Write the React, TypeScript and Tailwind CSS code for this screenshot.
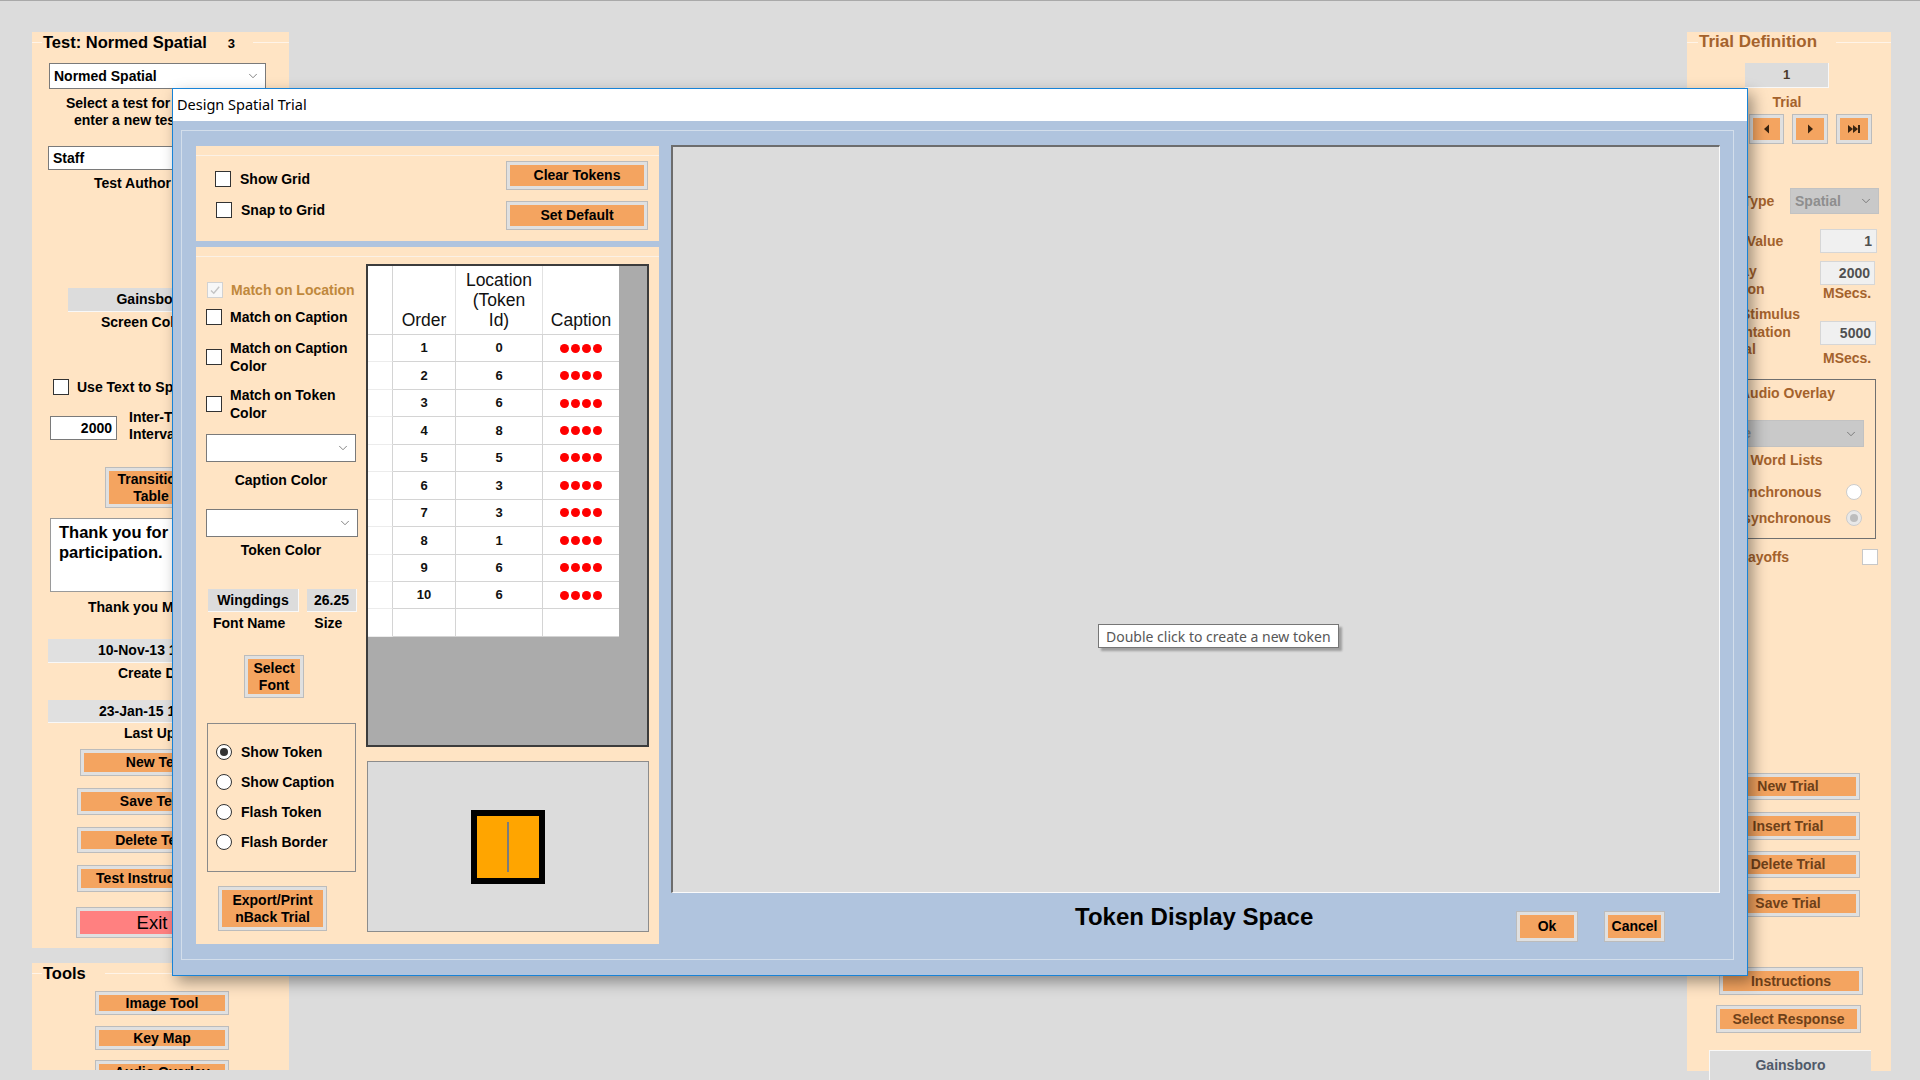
import React from 'react';
import { ChevronDown } from 'lucide-react';

type Kids = { children?: React.ReactNode; className?: string };

const Btn = ({ className = '', inner = 'bg-[#f4a460]', children, textCls = '' }: Kids & { inner?: string; textCls?: string }) => (
  <div className={`border border-[#bcbcbc] bg-[#e0e0e0] p-[3px] shrink-0 ${className}`}>
    <div className={`${inner} h-full w-full flex items-center justify-center text-center ${textCls}`}>{children}</div>
  </div>
);

const Cb = ({ disabled = false, checked = false, className = '' }: { disabled?: boolean; checked?: boolean; className?: string }) => (
  <div
    className={`w-4 h-4 shrink-0 border flex items-center justify-center ${
      disabled ? 'border-[#d2d2d2] bg-[#f7f7f7]' : 'border-[#333333] bg-white'
    } ${className}`}
  >
    {checked && (
      <svg width="12" height="12" viewBox="0 0 12 12">
        <path d="M2 6.5 L4.8 9.2 L10.2 2.8" fill="none" stroke={disabled ? '#c4c4c4' : '#222'} strokeWidth="1.4" />
      </svg>
    )}
  </div>
);

const Radio = ({ checked = false, disabled = false }: { checked?: boolean; disabled?: boolean }) => (
  <div
    className={`w-4 h-4 rounded-full border flex items-center justify-center shrink-0 ${
      disabled ? (checked ? 'border-[#cccccc] bg-[#e8e8e8]' : 'border-[#cccccc] bg-white') : 'border-[#333333] bg-white'
    }`}
  >
    {checked && <div className={`w-2 h-2 rounded-full ${disabled ? 'bg-[#bdbdbd]' : 'bg-[#333333]'}`} />}
  </div>
);

const Dd = ({ className = '', text = '', textCls = '' }: { className?: string; text?: string; textCls?: string }) => (
  <div className={`flex items-center border shrink-0 ${className}`}>
    <span className={`flex-1 pl-[4px] whitespace-nowrap overflow-hidden ${textCls}`}>{text}</span>
    <ChevronDown size={14} strokeWidth={1.4} className="mr-[5px] text-[#6a6a6a]" />
  </div>
);

const GroupTitle = ({ text, lead, extra, size }: { text: string; lead: number; extra?: React.ReactNode; size: string }) => (
  <div className="flex items-center h-[20px] shrink-0">
    <div className="h-px bg-[#fff4e8]" style={{ width: lead }} />
    <span className={`${size} leading-[20px] px-px whitespace-nowrap`}>{text}</span>
    {extra}
    <div className="flex-1 h-px bg-[#fff4e8] ml-[18px]" />
  </div>
);

const locations = [0, 6, 6, 8, 5, 3, 3, 1, 6, 6];

const Dots = () => (
  <div className="flex gap-[2px]">
    {[0, 1, 2, 3].map((i) => (
      <div key={i} className="w-[9px] h-[9px] rounded-full bg-[#ff0000]" />
    ))}
  </div>
);

function LeftPanel() {
  return (
    <div className="flex flex-col w-[257px] gap-[15px]">
      <div className="h-[916px] bg-[#ffe4c4] flex flex-col *:shrink-0 text-[14px] font-bold text-black">
        <GroupTitle
          text="Test: Normed Spatial"
          lead={10}
          size="text-[16.5px]"
          extra={<span className="ml-[20px] text-[13px] leading-[20px] pt-[3px]">3</span>}
        />
        <Dd className="ml-[17px] mt-[11px] w-[217px] h-[26px] bg-white border-[#7a7a7a]" text="Normed Spatial" textCls="text-[14px]" />
        <div className="mt-[6px] leading-[17px] whitespace-nowrap">
          <div className="ml-[34px]">Select a test for editing or</div>
          <div className="ml-[42px]">enter a new test name</div>
        </div>
        <div className="ml-[16px] mt-[17px] w-[218px] h-[24px] bg-white border border-[#7a7a7a] flex items-center pl-[4px]">Staff</div>
        <div className="ml-[62px] mt-[5px] h-[16px] leading-[16px] whitespace-nowrap">Test Author</div>
        <div className="ml-[36px] mt-[97px] w-[168px] h-[24px] bg-[#dcdcdc] border-b border-r border-[#f8f8f8] flex items-center justify-center">Gainsboro</div>
        <div className="ml-[69px] mt-[2px] h-[16px] leading-[16px] whitespace-nowrap">Screen Color</div>
        <div className="ml-[21px] mt-[49px] h-[16px] flex items-center gap-[8px] whitespace-nowrap">
          <Cb />
          <span className="leading-[16px]">Use Text to Speech</span>
        </div>
        <div className="ml-[18px] mt-[21px] flex items-start">
          <div className="w-[67px] h-[24px] bg-white border border-[#7a7a7a] flex items-center justify-end pr-[4px]">2000</div>
          <div className="ml-[12px] -mt-[7px] leading-[17px] whitespace-nowrap">
            <div>Inter-Trial</div>
            <div>Interval</div>
          </div>
        </div>
        <Btn className="ml-[73px] mt-[24px] w-[92px] h-[41px]" textCls="leading-[17px]">
          Transition
          <br />
          Table
        </Btn>
        <div className="ml-[18px] mt-[10px] w-[216px] h-[74px] bg-white border border-[#9a9a9a] pl-[8px] pt-[3px] text-[16.5px] leading-[20px] whitespace-nowrap">
          Thank you for your
          <br />
          participation.
        </div>
        <div className="ml-[56px] mt-[7px] h-[16px] leading-[16px] whitespace-nowrap">Thank you Message</div>
        <div className="ml-[16px] mt-[24px] w-[218px] h-[24px] bg-[#e0e0e0] border-b border-r border-[#f8f8f8] flex items-center pl-[50px] whitespace-nowrap">
          10-Nov-13 11:08
        </div>
        <div className="ml-[86px] mt-[2px] h-[16px] leading-[16px] whitespace-nowrap">Create Date</div>
        <div className="ml-[16px] mt-[19px] w-[218px] h-[23px] bg-[#e0e0e0] border-b border-r border-[#f8f8f8] flex items-center pl-[51px] whitespace-nowrap">
          23-Jan-15 10:12
        </div>
        <div className="ml-[92px] mt-[2px] h-[16px] leading-[16px] whitespace-nowrap">Last Updated</div>
        <Btn className="ml-[48px] mt-[8px] w-[152px] h-[27px]">New Test</Btn>
        <Btn className="ml-[45px] mt-[12px] w-[150px] h-[27px]">Save Test</Btn>
        <Btn className="ml-[45px] mt-[12px] w-[150px] h-[26px]">Delete Test</Btn>
        <Btn className="ml-[45px] mt-[12px] w-[150px] h-[27px]">Test Instructions</Btn>
        <Btn className="ml-[44px] mt-[15px] w-[152px] h-[31px]" inner="bg-[#ff8080]" textCls="text-[18.5px] font-normal">
          Exit
        </Btn>
      </div>
      <div className="h-[107px] bg-[#ffe4c4] flex flex-col *:shrink-0 overflow-hidden text-[14px] font-bold text-black">
        <GroupTitle text="Tools" lead={10} size="text-[16.5px]" />
        <Btn className="ml-[63px] mt-[8px] w-[134px] h-[24px]">Image Tool</Btn>
        <Btn className="ml-[63px] mt-[11px] w-[134px] h-[24px]">Key Map</Btn>
        <Btn className="ml-[63px] mt-[10px] w-[134px] h-[24px]">Audio Overlay</Btn>
      </div>
    </div>
  );
}

const NavIcon = ({ kind }: { kind: 'prev' | 'next' | 'last' }) => (
  <svg width="14" height="12" viewBox="0 0 14 12">
    {kind === 'prev' && <path d="M4 6 L9 1.5 L9 10.5 Z" fill="#3a2410" />}
    {kind === 'next' && <path d="M10 6 L5 1.5 L5 10.5 Z" fill="#3a2410" />}
    {kind === 'last' && (
      <g fill="#3a2410">
        <path d="M1 2 L6 6 L1 10 Z" />
        <path d="M6 2 L11 6 L6 10 Z" />
        <rect x="11" y="2" width="2" height="8" />
      </g>
    )}
  </svg>
);

function RightPanel() {
  const inp = 'h-[24px] bg-[#f0f0f0] border border-[#d6d6d6] flex items-center justify-end pr-[4px] text-[#505050]';
  return (
    <div className="w-[204px] h-[1039px] bg-[#ffe4c4] flex flex-col *:shrink-0 text-[14px] font-bold text-[#a4622c]">
      <GroupTitle text="Trial Definition" lead={11} size="text-[17px]" />
      <div className="ml-[58px] mt-[11px] w-[84px] h-[25px] bg-[#dcdcdc] border-b border-r border-[#f8f8f8] flex items-center justify-center text-[13px] text-[#4b3a2a]">
        1
      </div>
      <div className="ml-[58px] w-[84px] mt-[6px] h-[16px] leading-[16px] text-center">Trial</div>
      <div className="flex ml-[62px] mt-[4px] gap-[8px]">
        <Btn className="w-[35px] h-[30px] border-[#b5b5b5] bg-[#cdcdcd]">
          <NavIcon kind="prev" />
        </Btn>
        <Btn className="w-[36px] h-[30px] border-[#b5b5b5] bg-[#cdcdcd]">
          <NavIcon kind="next" />
        </Btn>
        <Btn className="w-[36px] h-[30px] border-[#b5b5b5] bg-[#cdcdcd]">
          <NavIcon kind="last" />
        </Btn>
      </div>
      <div className="flex items-center mt-[44px] h-[26px]">
        <span className="ml-[23px] whitespace-nowrap">Trial Type</span>
        <Dd className="ml-auto mr-[12px] w-[89px] h-[26px] bg-[#c9c9c9] border-[#c2c2c2]" text="Spatial" textCls="text-[#8e8e8e]" />
      </div>
      <div className="flex items-center mt-[15px] h-[24px]">
        <span className="ml-[14px] whitespace-nowrap">Target Value</span>
        <div className={`ml-auto mr-[14px] w-[57px] ${inp}`}>1</div>
      </div>
      <div className="flex items-start mt-[8px]">
        <div className="ml-[20px] mt-[1px] leading-[18px] whitespace-nowrap">
          <div>Display</div>
          <div>Duration</div>
        </div>
        <div className="ml-auto mr-[16px] flex flex-col items-end">
          <div className={`w-[55px] ${inp}`}>2000</div>
          <div className="w-[52px] h-[16px] leading-[16px] whitespace-nowrap">MSecs.</div>
        </div>
      </div>
      <div className="flex items-start mt-[5px]">
        <div className="ml-[19px] leading-[17.5px] whitespace-nowrap">
          <div>Inter-Stimulus</div>
          <div>Presentation</div>
          <div>Interval</div>
        </div>
        <div className="ml-auto mr-[15px] flex flex-col items-end pt-[15px]">
          <div className={`w-[56px] ${inp}`}>5000</div>
          <div className="mt-[5px] w-[53px] h-[16px] leading-[16px] whitespace-nowrap">MSecs.</div>
        </div>
      </div>
      <div className="ml-[9px] mt-[13px] w-[180px] h-[160px] border border-[#707070] flex flex-col *:shrink-0">
        <div className="ml-[20px] mt-[5px] h-[16px] flex items-center gap-[7px] whitespace-nowrap">
          <Cb disabled />
          <span className="leading-[16px]">Audio Overlay</span>
        </div>
        <Dd className="ml-[14px] mt-[19px] w-[153px] h-[27px] bg-[#c9c9c9] border-[#c2c2c2]" text="None" textCls="text-[#8e8e8e]" />
        <div className="ml-[24px] mt-[5px] h-[16px] leading-[16px] whitespace-nowrap">Use Word Lists</div>
        <div className="ml-[35px] mt-[16px] mr-[13px] h-[16px] flex items-center">
          <span className="leading-[16px]">Synchronous</span>
          <div className="ml-auto">
            <Radio disabled />
          </div>
        </div>
        <div className="ml-[36px] mt-[10px] mr-[13px] h-[16px] flex items-center">
          <span className="leading-[16px]">Asynchronous</span>
          <div className="ml-auto">
            <Radio disabled checked />
          </div>
        </div>
      </div>
      <div className="mt-[10px] h-[16px] flex items-center">
        <span className="ml-[22px] leading-[16px] whitespace-nowrap">Use Payoffs</span>
        <div className="ml-auto mr-[13px] w-4 h-4 bg-white border border-[#c8c8c8]" />
      </div>
      <div className="flex flex-col text-[#6e4019]">
        <Btn className="ml-[29px] mt-[208px] w-[144px] h-[27px]">New Trial</Btn>
        <Btn className="ml-[29px] mt-[12px] w-[144px] h-[28px]">Insert Trial</Btn>
        <Btn className="ml-[29px] mt-[11px] w-[144px] h-[27px]">Delete Trial</Btn>
        <Btn className="ml-[29px] mt-[12px] w-[144px] h-[27px]">Save Trial</Btn>
        <Btn className="ml-[32px] mt-[50px] w-[144px] h-[28px]">Instructions</Btn>
        <Btn className="ml-[29px] mt-[10px] w-[145px] h-[28px]">Select Response</Btn>
      </div>
      <div className="ml-[22px] mt-[17px] w-[162px] h-[30px] bg-[#dcdcdc] border-t border-l border-[#f8f8f8] flex items-start justify-center pt-[4px] text-[#505a6a]">
        Gainsboro
      </div>
    </div>
  );
}

function TokenTable() {
  const cols = ['w-[25px]', 'w-[63px]', 'w-[87px]', 'w-[76px]'];
  return (
    <div className="w-[283px] h-[483px] border-2 border-[#3c3c3c] bg-[#ababab]">
      <div className="w-[251px] bg-white">
        <div className="flex h-[69px] border-b border-[#d4d4d4] text-[17.5px] font-normal text-[#111] leading-[20px]">
          <div className={`${cols[0]} border-r border-[#d4d4d4]`} />
          <div className={`${cols[1]} border-r border-[#e2e2e2] flex items-end justify-center pb-[4px]`}>Order</div>
          <div className={`${cols[2]} border-r border-[#e2e2e2] flex items-end justify-center text-center pb-[4px]`}>
            Location
            <br />
            (Token
            <br />
            Id)
          </div>
          <div className={`${cols[3]} flex items-end justify-center pb-[4px]`}>Caption</div>
        </div>
        {[...locations.map((l, i) => ({ o: String(i + 1), l: String(l), dots: true })), { o: '', l: '', dots: false }].map((r, i) => (
          <div key={i} className="flex h-[27.45px] text-[13px] font-bold text-[#111]">
            <div className={`${cols[0]} border-r border-b border-[#d4d4d4] border-b-[#ececec]`} />
            <div className={`${cols[1]} border-r border-b border-[#d4d4d4] flex items-center justify-center`}>{r.o}</div>
            <div className={`${cols[2]} border-r border-b border-[#d4d4d4] flex items-center justify-center`}>{r.l}</div>
            <div className={`${cols[3]} border-b border-[#d4d4d4] flex items-center justify-center`}>{r.dots && <Dots />}</div>
          </div>
        ))}
      </div>
    </div>
  );
}

function Dialog() {
  return (
    <div className="absolute left-[172px] top-[87px] w-[1576px] h-[888px] border border-[#1883d7] flex flex-col shadow-[5px_6px_14px_rgba(0,0,0,0.38)]">
      <div className="h-[32px] bg-white flex items-center pl-[4px] font-['Noto_Sans',sans-serif] text-[14.5px] text-black">Design Spatial Trial</div>
      <div className="flex-1 bg-[#b0c4de] pt-[9px] pl-[8px] pr-[13px] pb-[15px] flex">
        <div className="flex-1 border border-[#d3deeb] pl-[14px] pt-[15px] pr-[13px] flex gap-[12px]">
          {/* left column */}
          <div className="w-[463px] flex flex-col gap-[6px] text-[14px] font-bold text-black">
            <div className="h-[95px] bg-[#ffe4c4] flex flex-col">
              <div className="mt-[9px] h-px bg-[#fbf1e6]" />
              <div className="flex items-start">
                <div className="pl-[19px] flex flex-col">
                  <div className="mt-[15px] h-[16px] flex items-center gap-[9px]">
                    <Cb />
                    <span className="leading-[16px]">Show Grid</span>
                  </div>
                  <div className="mt-[15px] ml-px h-[16px] flex items-center gap-[9px]">
                    <Cb />
                    <span className="leading-[16px]">Snap to Grid</span>
                  </div>
                </div>
                <div className="ml-auto mr-[11px] flex flex-col">
                  <Btn className="mt-[5px] w-[142px] h-[29px]">Clear Tokens</Btn>
                  <Btn className="mt-[11px] w-[142px] h-[29px]">Set Default</Btn>
                </div>
              </div>
            </div>
            <div className="h-[697px] bg-[#ffe4c4] flex flex-col">
              <div className="mt-[9px] h-px bg-[#fbf1e6]" />
              <div className="flex items-start pl-[10px]">
                {/* controls */}
                <div className="w-[152px] flex flex-col *:shrink-0">
                  <div className="mt-[25px] h-[16px] flex items-center gap-[8px] ml-px">
                    <Cb disabled checked />
                    <span className="leading-[16px] text-[#c0883c] whitespace-nowrap">Match on Location</span>
                  </div>
                  <div className="mt-[11px] h-[16px] flex items-center gap-[8px]">
                    <Cb />
                    <span className="leading-[16px] whitespace-nowrap">Match on Caption</span>
                  </div>
                  <div className="mt-[13.5px] h-[36px] flex items-center gap-[8px]">
                    <Cb />
                    <span className="leading-[18px] whitespace-nowrap">
                      Match on Caption
                      <br />
                      Color
                    </span>
                  </div>
                  <div className="mt-[11.5px] h-[36px] flex items-center gap-[8px]">
                    <Cb />
                    <span className="leading-[18px] whitespace-nowrap">
                      Match on Token
                      <br />
                      Color
                    </span>
                  </div>
                  <Dd className="mt-[12px] w-[150px] h-[28px] bg-white border-[#7a7a7a]" />
                  <div className="mt-[10px] w-[150px] h-[16px] leading-[16px] text-center">Caption Color</div>
                  <Dd className="mt-[21px] w-[152px] h-[28px] bg-white border-[#7a7a7a]" />
                  <div className="mt-[5px] w-[150px] h-[16px] leading-[16px] text-center">Token Color</div>
                  <div className="mt-[31px] ml-[2px] flex gap-[8px]">
                    <div className="w-[91px] h-[23px] bg-[#dcdcdc] border-b border-r border-[#f8f8f8] flex items-center justify-center">Wingdings</div>
                    <div className="w-[50px] h-[23px] bg-[#dcdcdc] border-b border-r border-[#f8f8f8] flex items-center justify-center">26.25</div>
                  </div>
                  <div className="mt-[3px] flex h-[16px] leading-[16px]">
                    <span className="ml-[7px]">Font Name</span>
                    <span className="ml-[29px]">Size</span>
                  </div>
                  <Btn className="mt-[24px] ml-[38px] w-[60px] h-[43px]" textCls="leading-[17px]">
                    Select
                    <br />
                    Font
                  </Btn>
                  <div className="mt-[25px] ml-px w-[149px] h-[149px] border border-[#8a8a8a] flex flex-col pl-[8px]">
                    {['Show Token', 'Show Caption', 'Flash Token', 'Flash Border'].map((t, i) => (
                      <div key={t} className={`h-[16px] flex items-center gap-[9px] ${i === 0 ? 'mt-[20px]' : 'mt-[14px]'}`}>
                        <Radio checked={i === 0} />
                        <span className="leading-[16px] whitespace-nowrap">{t}</span>
                      </div>
                    ))}
                  </div>
                  <Btn className="mt-[14px] ml-[12px] w-[109px] h-[45px]" textCls="leading-[17px]">
                    Export/Print
                    <br />
                    nBack Trial
                  </Btn>
                </div>
                {/* table column */}
                <div className="ml-[8px] mt-[7px] flex flex-col">
                  <TokenTable />
                  <div className="mt-[14px] ml-px w-[282px] h-[171px] bg-[#dcdcdc] border border-[#8c8c8c] flex items-center justify-center">
                    <div className="w-[74px] h-[74px] border-[6px] border-black bg-[#ffa500] flex items-center justify-center">
                      <div className="w-[2px] h-[50px] bg-[#7c7c7c]" />
                    </div>
                  </div>
                </div>
              </div>
            </div>
          </div>
          {/* canvas column */}
          <div className="flex-1 flex flex-col -mt-px">
            <div className="relative h-[748px] shrink-0 bg-[#dcdcdc] border-t-2 border-l-2 border-[#6d6d6d] border-r border-b border-r-[#fafafa] border-b-[#fafafa]">
              <div className="absolute left-[425px] top-[477px] h-[24px] bg-white border border-[#767676] shadow-[3px_3px_2px_rgba(0,0,0,0.28)] flex items-center px-[7px] font-['Noto_Sans',sans-serif] text-[14px] text-[#575757] whitespace-nowrap">
                Double click to create a new token
              </div>
            </div>
            <div className="flex items-start">
              <div className="ml-[404px] mt-[10px] text-[24px] font-bold leading-[28px] text-black whitespace-nowrap">Token Display Space</div>
              <Btn className="ml-auto mt-[18px] w-[62px] h-[31px]" textCls="text-[14px] font-bold text-black">
                Ok
              </Btn>
              <Btn className="ml-[26px] mr-[55px] mt-[18px] w-[61px] h-[31px]" textCls="text-[14px] font-bold text-black">
                Cancel
              </Btn>
            </div>
          </div>
        </div>
      </div>
    </div>
  );
}

export default function App() {
  return (
    <div className="relative w-[1920px] h-[1080px] overflow-hidden bg-[#dcdcdc] border-t border-[#a9a9a9] font-['Liberation_Sans',Arial,sans-serif]">
      <div className="flex pt-[31px] pl-[32px] pr-[29px]">
        <LeftPanel />
        <div className="ml-auto">
          <RightPanel />
        </div>
      </div>
      <Dialog />
    </div>
  );
}
